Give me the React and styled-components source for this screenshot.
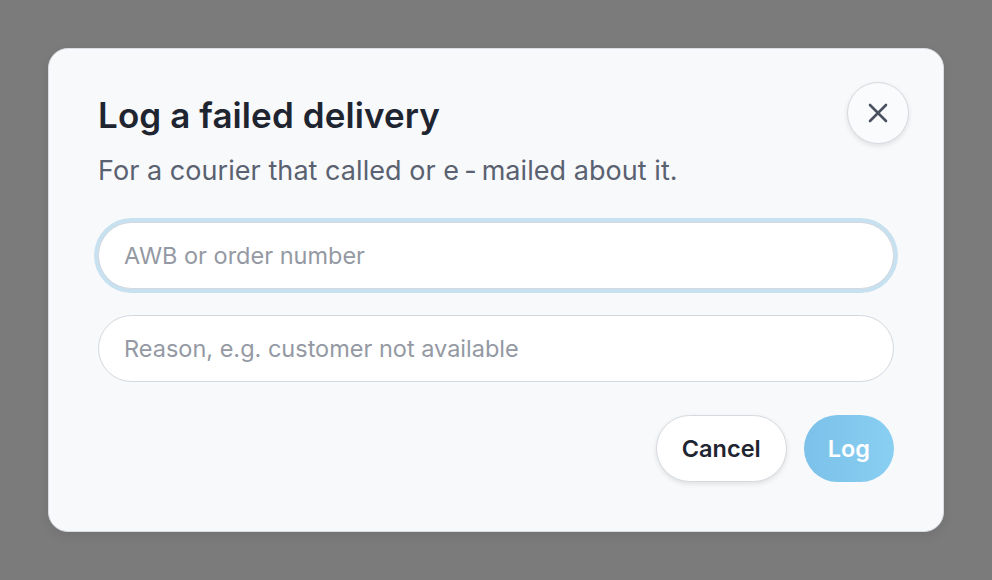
import React from "react";
import styled, { createGlobalStyle } from "styled-components";

const GlobalStyle = createGlobalStyle`
  html, body {
    margin: 0;
    padding: 0;
    background: #7b7b7c;
    font-family: Inter, "Noto Sans", "Liberation Sans", sans-serif;
  }
  * { box-sizing: border-box; }
`;

const Backdrop = styled.div`
  width: 100vw;
  height: 100vh;
  display: flex;
  align-items: center;
  justify-content: center;
`;

const Dialog = styled.div`
  width: 896px;
  background: #f8f9fb;
  border: 1px solid #d9dde3;
  border-radius: 20px;
  box-shadow: 0 4px 12px rgba(0, 0, 0, 0.08);
  padding: 45px 49px 49px;
  display: flex;
  flex-direction: column;
`;

const Header = styled.div`
  display: flex;
  justify-content: space-between;
  align-items: flex-start;
`;

const Heading = styled.div`
  display: flex;
  flex-direction: column;
  gap: 17px;
`;

const Title = styled.h2`
  margin: 0;
  font-size: 35px;
  line-height: 42px;
  font-weight: 600;
  color: #1f2530;
  letter-spacing: 0.1px;
`;

const Subtitle = styled.p`
  margin: 0;
  font-size: 27px;
  line-height: 36px;
  color: #5a6170;
  letter-spacing: 0.05px;
`;

const Hyphen = styled.span`
  margin: 0 5px;
`;

const CloseButton = styled.button`
  width: 62px;
  height: 62px;
  margin: -12px -15px 0 0;
  border-radius: 50%;
  border: 1px solid #d6dae0;
  background: #fafbfc;
  box-shadow: 0 2px 5px rgba(0, 0, 0, 0.1);
  display: flex;
  align-items: center;
  justify-content: center;
  padding: 0;
  cursor: pointer;
`;

const Fields = styled.div`
  display: flex;
  flex-direction: column;
  gap: 26px;
  margin-top: 33px;
`;

const Input = styled.input`
  width: 100%;
  height: 67px;
  border-radius: 999px;
  border: 1px solid #d3d8df;
  background: #ffffff;
  padding: 0 25px;
  font-family: inherit;
  font-size: 23.5px;
  color: #1f2530;
  outline: none;
  box-shadow: ${({ $focused }) =>
    $focused ? "0 0 0 4px #c8e1f0" : "none"};

  &::placeholder {
    color: #9499a3;
  }
`;

const Actions = styled.div`
  display: flex;
  justify-content: flex-end;
  gap: 17px;
  margin-top: 33px;
`;

const Button = styled.button`
  height: 67px;
  padding: 0 ${({ $primary }) => ($primary ? "24px" : "25px")};
  border-radius: 999px;
  font-family: inherit;
  font-size: 23.5px;
  font-weight: 600;
  cursor: pointer;
  border: ${({ $primary }) => ($primary ? "none" : "1px solid #d6dae0")};
  background: ${({ $primary }) =>
    $primary ? "linear-gradient(90deg, #7cc1e9, #88cff2)" : "#ffffff"};
  color: ${({ $primary }) => ($primary ? "#ffffff" : "#1f2530")};
  box-shadow: ${({ $primary }) =>
    $primary ? "none" : "0 2px 5px rgba(0, 0, 0, 0.1)"};
`;

const App = () => {
  return (
    <>
      <GlobalStyle />
      <Backdrop>
        <Dialog>
          <Header>
            <Heading>
              <Title>Log a failed delivery</Title>
              <Subtitle>
                For a courier that called or e<Hyphen>-</Hyphen>mailed about it.
              </Subtitle>
            </Heading>
            <CloseButton aria-label="Close">
              <svg width="24" height="24" viewBox="0 0 24 24" fill="none"
                stroke="#4a5160" strokeWidth="2.6" strokeLinecap="round">
                <path d="M4 4L20 20M20 4L4 20" />
              </svg>
            </CloseButton>
          </Header>
          <Fields>
            <Input $focused placeholder="AWB or order number" />
            <Input placeholder="Reason, e.g. customer not available" />
          </Fields>
          <Actions>
            <Button>Cancel</Button>
            <Button $primary>Log</Button>
          </Actions>
        </Dialog>
      </Backdrop>
    </>
  );
};

export default App;
